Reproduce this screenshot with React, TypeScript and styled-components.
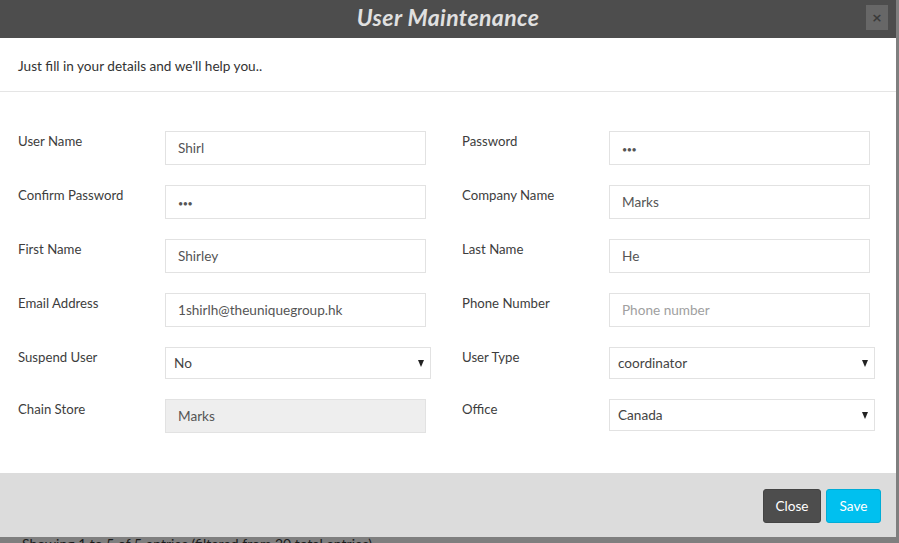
import React from "react";
import styled, { createGlobalStyle } from "styled-components";

const Global = createGlobalStyle`
  html, body { margin: 0; padding: 0; }
  body {
    background: #7f7f7f;
    font-family: Lato, "Liberation Sans", sans-serif;
    width: 899px;
    height: 543px;
    overflow: hidden;
  }
  * { box-sizing: border-box; }
`;

const Page = styled.div`
  width: 899px;
  height: 543px;
  overflow: hidden;
  background: #7f7f7f;
`;

const Modal = styled.div`
  width: 896px;
  height: 537px;
  background: #fff;
  display: flex;
  flex-direction: column;
`;

const Header = styled.div`
  height: 38px;
  background: #4d4d4d;
  position: relative;
  display: flex;
  align-items: center;
  justify-content: center;
  padding-bottom: 4px;
`;

const Title = styled.h2`
  margin: 0;
  font-size: 23px;
  font-style: italic;
  font-weight: 700;
  color: #e0e0e0;
  line-height: 30px;
  letter-spacing: 0.4px;
`;

const CloseX = styled.button`
  position: absolute;
  right: 8px;
  top: 5px;
  width: 22px;
  height: 25px;
  border: none;
  background: #676767;
  color: #3a3a3a;
  font-family: "DejaVu Sans", sans-serif;
  font-size: 13px;
  font-weight: 700;
  padding: 0;
  display: flex;
  align-items: center;
  justify-content: center;
`;

const Intro = styled.div`
  height: 54px;
  padding: 2px 18px 0;
  display: flex;
  align-items: center;
  font-size: 13.6px;
  color: #333;
  border-bottom: 1px solid #e5e5e5;
`;

const Body = styled.div`
  flex: 1;
  padding: 39px 0 0 18px;
  display: grid;
  grid-template-columns: 408px 408px;
  column-gap: 36px;
  row-gap: 20px;
  align-content: start;
  align-items: start;
`;

const Field = styled.div`
  display: grid;
  grid-template-columns: 147px 261px;
  align-items: start;
`;

const Label = styled.label`
  font-size: 13.2px;
  line-height: 20px;
  color: #3d3d3d;
`;

const Input = styled.input<{ $disabled?: boolean }>`
  width: 261px;
  height: 34px;
  border: 1px solid #e2e2e2;
  background: ${(p) => (p.$disabled ? "#eeeeee" : "#fff")};
  padding: 0 12px;
  font-family: Lato, "Liberation Sans", sans-serif;
  font-size: 13.6px;
  color: #555;
  outline: none;
  &::placeholder { color: #a0a0a0; }
`;

const Dots = styled(Input)`
  font-size: 9px;
  letter-spacing: -0.5px;
  padding-top: 2px;
`;

const SelectWrap = styled.div<{ $h: number }>`
  position: relative;
  width: 266px;
  height: ${(p) => p.$h}px;
  &::after {
    content: "";
    position: absolute;
    right: 7px;
    top: 50%;
    margin-top: -3px;
    border-left: 3.5px solid transparent;
    border-right: 3.5px solid transparent;
    border-top: 7px solid #222;
    pointer-events: none;
  }
`;

const Select = styled.select`
  appearance: none;
  -webkit-appearance: none;
  width: 100%;
  height: 100%;
  border: 1px solid #e2e2e2;
  background: #fff;
  border-radius: 0;
  padding: 0 8px;
  font-family: Lato, "Liberation Sans", sans-serif;
  font-size: 13.6px;
  color: #444;
  outline: none;
`;

const Footer = styled.div`
  height: 64px;
  background: #dcdcdc;
  display: flex;
  justify-content: flex-end;
  align-items: flex-start;
  gap: 5px;
  padding: 16px 15px 0 0;
`;

const Btn = styled.button<{ $variant: "dark" | "info" }>`
  height: 34px;
  width: ${(p) => (p.$variant === "dark" ? 58 : 55)}px;
  padding: 0;
  border-radius: 3px;
  border: 1px solid ${(p) => (p.$variant === "dark" ? "#444" : "#00acd6")};
  background: ${(p) => (p.$variant === "dark" ? "#4d4d4d" : "#00c0ef")};
  color: #fff;
  font-family: Lato, "Liberation Sans", sans-serif;
  font-size: 13.6px;
`;

const Behind = styled.div`
  padding-left: 22px;
  font-family: Lato, "Liberation Sans", sans-serif;
  font-size: 14px;
  line-height: 14px;
  color: #1a1a1a;
  white-space: nowrap;
`;

type Row =
  | { kind: "input"; label: string; value?: string; placeholder?: string; dots?: boolean; disabled?: boolean }
  | { kind: "select"; label: string; value: string; h: number };

const rows: Row[] = [
  { kind: "input", label: "User Name", value: "Shirl" },
  { kind: "input", label: "Password", value: "•••", dots: true },
  { kind: "input", label: "Confirm Password", value: "•••", dots: true },
  { kind: "input", label: "Company Name", value: "Marks" },
  { kind: "input", label: "First Name", value: "Shirley" },
  { kind: "input", label: "Last Name", value: "He" },
  { kind: "input", label: "Email Address", value: "1shirlh@theuniquegroup.hk" },
  { kind: "input", label: "Phone Number", placeholder: "Phone number" },
  { kind: "select", label: "Suspend User", value: "No", h: 32 },
  { kind: "select", label: "User Type", value: "coordinator", h: 32 },
  { kind: "input", label: "Chain Store", value: "Marks", disabled: true },
  { kind: "select", label: "Office", value: "Canada", h: 32 },
];

export default function App() {
  return (
    <Page>
      <Global />
      <Modal>
        <Header>
          <Title>User Maintenance</Title>
          <CloseX>×</CloseX>
        </Header>
        <Intro>Just fill in your details and we'll help you..</Intro>
        <Body>
          {rows.map((r) => (
            <Field key={r.label}>
              <Label>{r.label}</Label>
              {r.kind === "select" ? (
                <SelectWrap $h={r.h}>
                  <Select defaultValue={r.value}>
                    <option>{r.value}</option>
                  </Select>
                </SelectWrap>
              ) : r.dots ? (
                <Dots readOnly value={r.value} />
              ) : (
                <Input
                  readOnly
                  $disabled={r.disabled}
                  value={r.value ?? ""}
                  placeholder={r.placeholder}
                />
              )}
            </Field>
          ))}
        </Body>
        <Footer>
          <Btn $variant="dark">Close</Btn>
          <Btn $variant="info">Save</Btn>
        </Footer>
      </Modal>
      <Behind>Showing 1 to 5 of 5 entries (filtered from 20 total entries)</Behind>
    </Page>
  );
}
